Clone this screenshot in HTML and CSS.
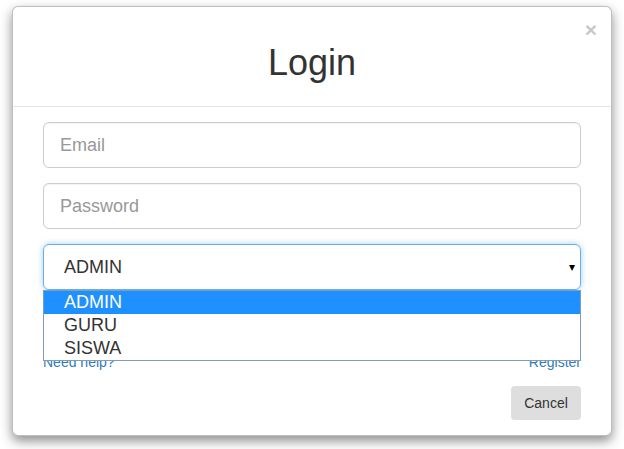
FILE: index.html
```html
<!DOCTYPE html>
<html>
<head>
<meta charset="utf-8">
<link rel="stylesheet" href="styles.css">
</head>
<body>
<div class="modal">
  <div class="modal-header">
    <h1 class="title">Login</h1>
    <span class="close">&times;</span>
  </div>
  <div class="modal-body">
    <div class="field"><div class="input placeholder">Email</div></div>
    <div class="field"><div class="input placeholder">Password</div></div>
    <div class="field select-wrap">
      <div class="input select">ADMIN<span class="caret">&#9662;</span></div>
      <ul class="dropdown">
        <li class="opt selected">ADMIN</li>
        <li class="opt">GURU</li>
        <li class="opt">SISWA</li>
      </ul>
    </div>
    <div class="links">
      <a class="link">Need help?</a>
      <a class="link">Register</a>
    </div>
  </div>
  <div class="modal-footer">
    <button class="btn">Cancel</button>
  </div>
</div>
</body>
</html>
```
FILE: styles.css
```css
html, body {
  margin: 0;
  padding: 0;
  background: #fff;
  font-family: "Liberation Sans", Arial, sans-serif;
  color: #333;
}
body {
  min-height: 449px;
  padding-top: 6px;
  box-sizing: border-box;
}
.modal {
  margin: 0 0 0 12px;
  width: 598px;
  height: 428px;
  border: 1px solid rgba(0,0,0,0.25);
  border-radius: 6px;
  box-shadow: 0 5px 12px rgba(0,0,0,0.45);
  background: #fff;
  display: flex;
  flex-direction: column;
}
.modal-header {
  position: relative;
  height: 99px;
  border-bottom: 1px solid #e5e5e5;
  display: flex;
  align-items: center;
  justify-content: center;
}
.title {
  margin: 0;
  font-weight: normal;
  font-size: 36px;
  line-height: 40px;
  color: #333;
  padding-top: 12px;
}
.close {
  position: absolute;
  right: 14px;
  top: 12px;
  font-size: 21px;
  line-height: 21px;
  color: #c8c8c8;
  font-weight: bold;
}
.modal-body {
  padding: 15px 30px 0 30px;
  display: flex;
  flex-direction: column;
}
.field {
  margin-bottom: 15px;
}
.input {
  height: 44px;
  border: 1px solid #ccc;
  border-radius: 6px;
  font-size: 18px;
  line-height: 44px;
  padding: 0 16px;
  box-shadow: inset 0 1px 1px rgba(0,0,0,0.05);
}
.placeholder {
  color: #999;
}
.select-wrap {
  position: relative;
}
.select {
  border-color: #66afe9;
  box-shadow: 0 0 6px rgba(102,175,233,0.6);
  color: #333;
  padding-left: 20px;
  display: flex;
  justify-content: space-between;
}
.caret {
  font-size: 12px;
  color: #000;
  margin-right: -11px;
}
.dropdown {
  position: absolute;
  left: 0;
  right: 0;
  top: 46px;
  margin: 0;
  padding: 0;
  list-style: none;
  border: 1px solid #7f9db9;
  background: #fff;
  z-index: 2;
}
.opt {
  height: 23px;
  line-height: 23px;
  font-size: 18px;
  padding-left: 20px;
  color: #333;
}
.opt.selected {
  background: #1e90ff;
  color: #fff;
}
.links {
  margin-top: 47px;
  display: flex;
  justify-content: space-between;
  font-size: 14px;
  line-height: 20px;
}
.link {
  color: #337ab7;
}
.modal-footer {
  padding: 14px 30px 0 30px;
  display: flex;
  justify-content: flex-end;
}
.btn {
  width: 70px;
  height: 34px;
  border: none;
  border-radius: 4px;
  background: #dedede;
  color: #333;
  font-family: "Liberation Sans", Arial, sans-serif;
  font-size: 14px;
  padding: 0;
}
```
